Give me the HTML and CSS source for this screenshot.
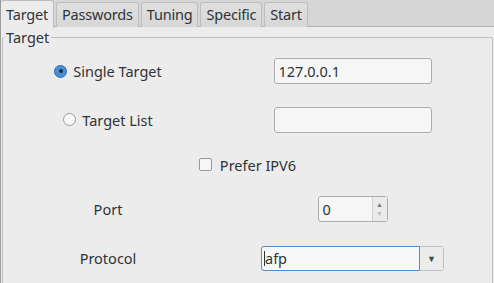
FILE: index.html
```html
<!DOCTYPE html>
<html lang="en">
<head>
  <meta charset="UTF-8">
  <title>Target</title>
  <link rel="stylesheet" href="styles.css">
</head>
<body>

<div class="window">
  <div class="tabs">
    <div class="tab active">Target</div>
    <div class="tab">Passwords</div>
    <div class="tab">Tuning</div>
    <div class="tab">Specific</div>
    <div class="tab">Start</div>
  </div>

  <div class="page">
    <fieldset class="group">
      <legend>Target</legend>

      <div class="form">
        <div class="choice">
          <span class="radio checked"></span>
          <span>Single Target</span>
        </div>
        <div class="field">127.0.0.1</div>

        <div class="choice">
          <span class="radio"></span>
          <span>Target List</span>
        </div>
        <div class="field"></div>

        <div class="choice wide">
          <span class="check"></span>
          <span>Prefer IPV6</span>
        </div>

        <div class="label">Port</div>
        <div class="spin">
          <span class="spin-value">0</span>
          <span class="spin-buttons">
            <span class="up">&#9650;</span>
            <span class="down">&#9660;</span>
          </span>
        </div>

        <div class="label">Protocol</div>
        <div class="combo">
          <span class="combo-edit"><span class="caret"></span>afp</span>
          <span class="combo-button">&#9660;</span>
        </div>
      </div>
    </fieldset>
  </div>
</div>

</body>
</html>
```

FILE: styles.css
```css
body {
  margin: 0;
  background: #ececec;
  font-family: "Noto Sans", sans-serif;
  font-size: 14.5px;
  color: #2e3436;
}
.window {
  height: 283px;
  border-left: 1px solid #9c9c9c;
  overflow: hidden;
}
.tabs {
  display: flex;
  gap: 2px;
  height: 26px;
  background: #d6d6d6;
  border-bottom: 1px solid #b4b4b4;
}
.tab {
  height: 24px;
  margin-top: 2px;
  padding: 0 5px;
  line-height: 23px;
  letter-spacing: -0.2px;
  border: 1px solid #bdbdbd;
  border-bottom: none;
  border-radius: 3px 3px 0 0;
  background: linear-gradient(#e0e0e0, #d6d6d6);
}
.tab.active {
  height: 27px;
  margin-top: 0;
  line-height: 27px;
  padding: 0 5px;
  border-left: none;
  background: #ececec;
}
.page {
  padding: 0 1px;
}
.group {
  margin: 0;
  padding: 0;
  height: 256px;
  border: 1px solid #bfbfbf;
  border-radius: 2px;
}
.group legend {
  margin-left: 1px;
  padding: 0 2px;
  line-height: 20px;
}
.form {
  display: grid;
  grid-template-columns: 210px 1fr;
  grid-template-rows: 48px 49px 41px 48px 50px;
  align-items: center;
  justify-items: center;
}
.choice {
  display: flex;
  align-items: center;
  gap: 6px;
}
.choice.wide {
  grid-column: 1 / 3;
  gap: 8px;
}
.radio {
  width: 11px;
  height: 11px;
  border: 1px solid #9a9a9a;
  border-radius: 50%;
  background: #fafafa;
  display: flex;
  align-items: center;
  justify-content: center;
}
.radio.checked {
  border-color: #2a6bb8;
  background: #4a90d9;
}
.radio.checked::after {
  content: "";
  width: 4px;
  height: 4px;
  border-radius: 50%;
  background: #1f2a33;
}
.check {
  width: 11px;
  height: 11px;
  border: 1px solid #9a9a9a;
  border-radius: 2px;
  background: #f6f6f6;
}
.field {
  box-sizing: border-box;
  width: 158px;
  height: 26px;
  padding: 0 4px;
  line-height: 24px;
  border: 1px solid #adadad;
  border-radius: 3px;
  background: #f6f6f6;
}
.spin {
  box-sizing: border-box;
  width: 70px;
  height: 26px;
  display: flex;
  border: 1px solid #adadad;
  border-radius: 3px;
  background: #f6f6f6;
}
.spin-value {
  flex: 1;
  padding-left: 4px;
  line-height: 24px;
}
.spin-buttons {
  width: 14px;
  display: flex;
  flex-direction: column;
  align-items: center;
  justify-content: center;
  border-left: 1px solid #d0d0d0;
  background: #ebebeb;
  font-size: 7px;
  line-height: 9px;
}
.up {
  color: #7a7a7a;
}
.down {
  color: #bcbcbc;
}
.combo {
  box-sizing: border-box;
  width: 183px;
  height: 25px;
  display: flex;
  border: 1px solid #c0c0c0;
  border-radius: 3px;
}
.combo-edit {
  flex: 1;
  display: flex;
  align-items: center;
  margin: -1px 0 -1px -1px;
  padding-left: 2px;
  border: 1px solid #4a90d9;
  border-radius: 3px 0 0 3px;
  background: #f8f8f8;
}
.caret {
  width: 1px;
  height: 15px;
  background: #2e3436;
}
.combo-button {
  width: 23px;
  display: flex;
  align-items: center;
  justify-content: center;
  background: #ececec;
  color: #3b4a55;
  font-size: 9px;
}
```
